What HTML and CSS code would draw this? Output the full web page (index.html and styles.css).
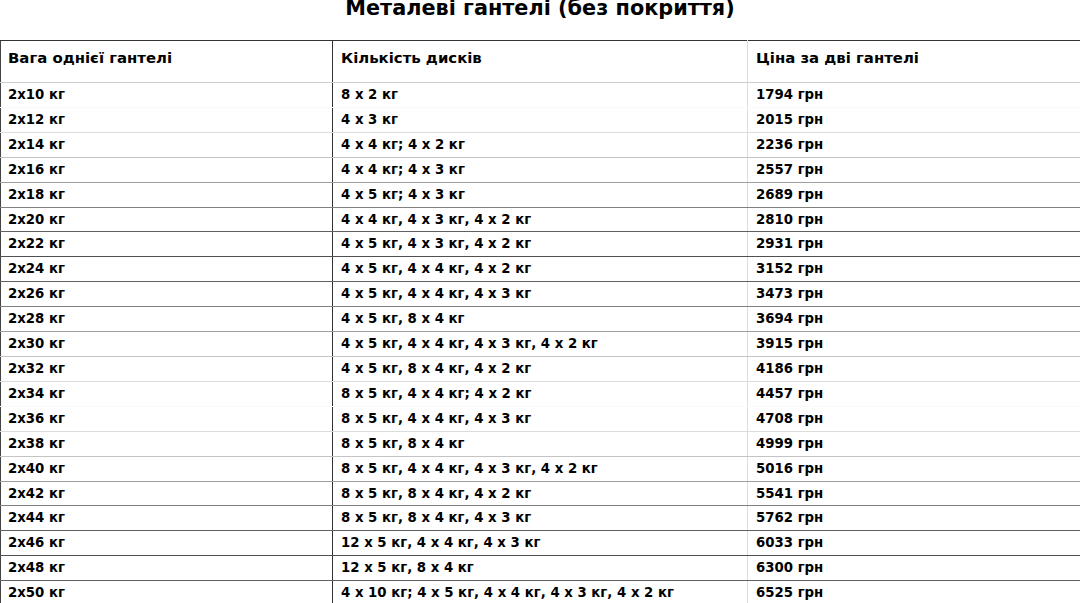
FILE: index.html
```html
<!DOCTYPE html>
<html lang="uk">
<head>
<meta charset="utf-8">
<title>Металеві гантелі (без покриття)</title>
<link rel="stylesheet" href="styles.css">
</head>
<body>
<h1 class="title">Металеві гантелі (без покриття)</h1>
<div class="wrap">
<table class="price">
<colgroup><col class="c1"><col class="c2"><col class="c3"></colgroup>
<thead>
<tr><th>Вага однієї гантелі</th><th>Кількість дисків</th><th>Ціна за дві гантелі</th></tr>
</thead>
<tbody>
<tr><td>2x10 кг</td><td>8 x 2 кг</td><td>1794 грн</td></tr>
<tr><td>2x12 кг</td><td>4 x 3 кг</td><td>2015 грн</td></tr>
<tr><td>2x14 кг</td><td>4 x 4 кг; 4 x 2 кг</td><td>2236 грн</td></tr>
<tr><td>2x16 кг</td><td>4 x 4 кг; 4 x 3 кг</td><td>2557 грн</td></tr>
<tr><td>2x18 кг</td><td>4 x 5 кг; 4 x 3 кг</td><td>2689 грн</td></tr>
<tr><td>2x20 кг</td><td>4 x 4 кг, 4 x 3 кг, 4 x 2 кг</td><td>2810 грн</td></tr>
<tr><td>2x22 кг</td><td>4 x 5 кг, 4 x 3 кг, 4 x 2 кг</td><td>2931 грн</td></tr>
<tr><td>2x24 кг</td><td>4 x 5 кг, 4 x 4 кг, 4 x 2 кг</td><td>3152 грн</td></tr>
<tr><td>2x26 кг</td><td>4 x 5 кг, 4 x 4 кг, 4 x 3 кг</td><td>3473 грн</td></tr>
<tr><td>2x28 кг</td><td>4 x 5 кг, 8 x 4 кг</td><td>3694 грн</td></tr>
<tr><td>2x30 кг</td><td>4 x 5 кг, 4 x 4 кг, 4 x 3 кг, 4 x 2 кг</td><td>3915 грн</td></tr>
<tr><td>2x32 кг</td><td>4 x 5 кг, 8 x 4 кг, 4 x 2 кг</td><td>4186 грн</td></tr>
<tr><td>2x34 кг</td><td>8 x 5 кг, 4 x 4 кг; 4 x 2 кг</td><td>4457 грн</td></tr>
<tr><td>2x36 кг</td><td>8 x 5 кг, 4 x 4 кг, 4 x 3 кг</td><td>4708 грн</td></tr>
<tr><td>2x38 кг</td><td>8 x 5 кг, 8 x 4 кг</td><td>4999 грн</td></tr>
<tr><td>2x40 кг</td><td>8 x 5 кг, 4 x 4 кг, 4 x 3 кг, 4 x 2 кг</td><td>5016 грн</td></tr>
<tr><td>2x42 кг</td><td>8 x 5 кг, 8 x 4 кг, 4 x 2 кг</td><td>5541 грн</td></tr>
<tr><td>2x44 кг</td><td>8 x 5 кг, 8 x 4 кг, 4 x 3 кг</td><td>5762 грн</td></tr>
<tr><td>2x46 кг</td><td>12 x 5 кг, 4 x 4 кг, 4 x 3 кг</td><td>6033 грн</td></tr>
<tr><td>2x48 кг</td><td>12 x 5 кг, 8 x 4 кг</td><td>6300 грн</td></tr>
<tr><td>2x50 кг</td><td>4 x 10 кг; 4 x 5 кг, 4 x 4 кг, 4 x 3 кг, 4 x 2 кг</td><td>6525 грн</td></tr>
</tbody>
</table>
</div>
</body>
</html>
```

FILE: styles.css
```css
html, body {
  margin: 0;
  padding: 0;
  background: #fff;
  overflow: hidden;
}
body {
  font-family: "DejaVu Sans", sans-serif;
  color: #000;
}
.title {
  margin: -4px 0 20px;
  font-size: 20.8px;
  line-height: 24px;
  font-weight: bold;
  text-align: center;
}
.wrap {
  width: 1080px;
  overflow: hidden;
}
.price {
  width: 1100px;
  table-layout: fixed;
  border-collapse: collapse;
  border-top: 1px solid #333;
  border-left: 1px solid #444;
}
.c1 { width: 332px; }
.c2 { width: 415px; }
.c3 { width: 353px; }
.price th {
  font-size: 14.9px;
  line-height: 17px;
  font-weight: bold;
  text-align: left;
  vertical-align: top;
  padding: 9px 8px 15px;
  border-bottom: 1px solid #cfcfcf;
}
.price td {
  font-size: 13.3px;
  line-height: 23.9px;
  font-weight: bold;
  padding: 0 8px;
  white-space: nowrap;
  border-bottom: 1px solid #999;
}
.price th:first-child,
.price td:first-child {
  padding-left: 7px;
  border-right: 1px solid #333;
}
.price th:nth-child(2),
.price td:nth-child(2) {
  border-right: 1px solid #ddd;
}
.price tbody tr:nth-child(12n+1) td { border-bottom-color: #fafafa; }
.price tbody tr:nth-child(12n+2) td { border-bottom-color: #dcdcdc; }
.price tbody tr:nth-child(12n+3) td { border-bottom-color: #c4c4c4; }
.price tbody tr:nth-child(12n+4) td { border-bottom-color: #a0a0a0; }
.price tbody tr:nth-child(12n+5) td { border-bottom-color: #808080; }
.price tbody tr:nth-child(12n+6) td { border-bottom-color: #606060; }
.price tbody tr:nth-child(12n+7) td { border-bottom-color: #505050; }
.price tbody tr:nth-child(12n+8) td { border-bottom-color: #606060; }
.price tbody tr:nth-child(12n+9) td { border-bottom-color: #808080; }
.price tbody tr:nth-child(12n+10) td { border-bottom-color: #a0a0a0; }
.price tbody tr:nth-child(12n+11) td { border-bottom-color: #c4c4c4; }
.price tbody tr:nth-child(12n) td { border-bottom-color: #dcdcdc; }
```
